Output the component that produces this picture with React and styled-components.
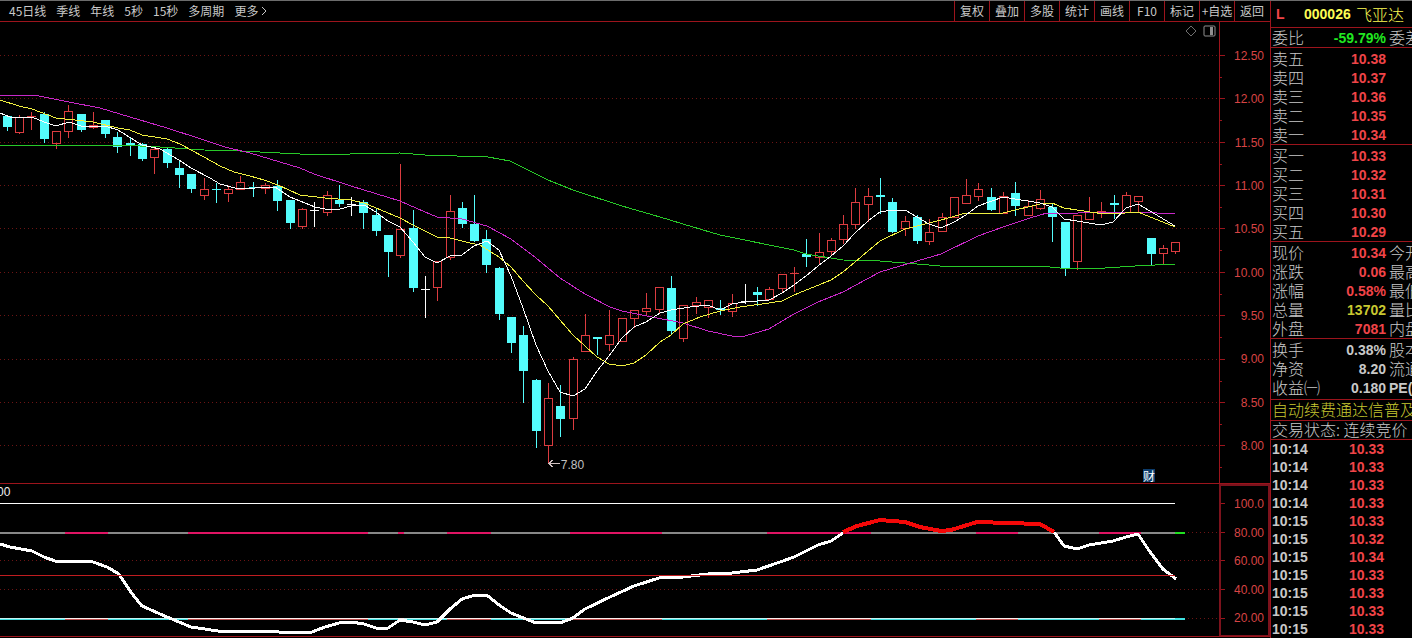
import React from "react";
import styled, { createGlobalStyle } from "styled-components";

const LINE = "#9c141c";
const DIM_LINE = "#7c121c";
const RED = "#f04448";
const CANDLE_RED = "#dc3c40";
const CYAN = "#54fcfc";
const GREY = "#c8c8c8";
const YELLOW = "#fcfc54";

const GlobalStyle = createGlobalStyle`
  * { box-sizing: border-box; }
  body {
    margin: 0;
    background: #000;
    color: ${GREY};
    font-family: "Liberation Sans", "Noto Sans CJK SC", sans-serif;
    overflow: hidden;
  }
`;

const Screen = styled.div`
  display: grid;
  grid-template-columns: minmax(0, 1fr) 142px;
  border-top: 1px solid #6c6c6c;
  background: #000;
`;

const Workspace = styled.main`
  display: flex;
  flex-direction: column;
  min-width: 0;
`;

const Toolbar = styled.header`
  display: flex;
  justify-content: space-between;
  height: 21px;
  border-bottom: 1px solid ${LINE};
`;

const Periods = styled.nav`
  display: flex;
  align-items: center;
  gap: 10px;
  padding-left: 9px;
`;

const barText = `
  border: 0;
  padding: 0;
  background: none;
  color: ${GREY};
  font-family: "Noto Sans CJK SC", sans-serif;
  font-size: 12px;
  line-height: 20px;
  white-space: nowrap;
`;

const PeriodButton = styled.button`
  ${barText}
  display: flex;
  align-items: center;
  gap: 2px;
`;

const Actions = styled.div`
  display: flex;
  padding-right: 1px;
`;

const ActionButton = styled.button`
  ${barText}
  width: 35px;
  border-left: 1px solid ${LINE};
`;

const Pane = styled.section`
  display: flex;
  height: ${(p) => p.$height}px;
  border-bottom: 1px solid ${LINE};
`;

const Plot = styled.div`
  position: relative;
  flex: 1;
  min-width: 0;
  overflow: hidden;
`;

const PlotSvg = styled.svg`
  display: block;
  width: 100%;
  height: 100%;
`;

const PriceAxis = styled.div`
  display: flex;
  width: 51px;
`;

const IndicatorAxis = styled(PriceAxis)`
  border: 2px solid ${DIM_LINE};
  border-bottom-width: 1px;
`;

const TickSvg = styled.svg`
  display: block;
  flex: none;
  width: 6px;
  height: 100%;
`;

const Scale = styled.div`
  flex: 1;
  display: flex;
  flex-direction: column;
  justify-content: space-between;
  padding: ${(p) => p.$padding};
  text-align: right;
  font-size: 12px;
  line-height: 16px;
  color: #d84444;
`;

const PlotTools = styled.div`
  position: absolute;
  top: 3px;
  right: 3px;
  display: flex;
  gap: 6px;
`;

const ToolButton = styled.button`
  border: 0;
  padding: 0;
  background: none;
  display: flex;
`;

const LowLabel = styled.span`
  position: absolute;
  left: 46%;
  top: 435px;
  font-size: 12px;
  line-height: 16px;
  color: #c0c0c0;
`;

const ReportBadge = styled.span`
  position: absolute;
  right: 64px;
  top: 447px;
  font-family: "Noto Sans CJK SC", sans-serif;
  font-size: 12px;
  line-height: 13px;
  color: #fff;
  background: #0c3c6c;
`;

const IndicatorLabel = styled.span`
  position: absolute;
  left: -3px;
  top: 0;
  font-size: 12px;
  line-height: 16px;
  color: #f0f0f0;
`;

const Sidebar = styled.aside`
  border-left: 1px solid ${LINE};
  overflow: hidden;
  font-family: "Noto Sans CJK SC", sans-serif;
  font-size: 16px;
  font-weight: 300;
`;

const Title = styled.h1`
  display: flex;
  align-items: center;
  height: 27px;
  margin: 0;
  padding-left: 5px;
  border-bottom: 1px solid ${LINE};
  font-size: 16px;
  line-height: 20px;
  font-weight: 300;
  color: ${YELLOW};
  white-space: nowrap;
`;

const Level = styled.span`
  width: 28px;
  color: ${RED};
  font-family: "Liberation Sans", sans-serif;
  font-size: 14px;
  font-weight: bold;
`;

const Code = styled.span`
  width: 52px;
  font-family: "Liberation Sans", sans-serif;
  font-size: 14px;
  font-weight: bold;
`;

const Block = styled.div`
  padding: ${(p) => p.$padding || "1px 0 0"};
  border-bottom: ${(p) => (p.$open ? 0 : 1)}px solid ${LINE};
`;

const Table = styled.table`
  width: 100%;
  table-layout: fixed;
  border-collapse: collapse;
`;

const Row = styled.tr`
  height: ${(p) => p.$height || 19}px;
  line-height: 16px;
`;

const Label = styled.th`
  width: 52px;
  padding: 0 0 2px 1px;
  text-align: left;
  font-weight: 300;
  white-space: nowrap;
`;

const Value = styled.td`
  padding: 0;
  text-align: right;
  font-family: "Liberation Sans", sans-serif;
  font-size: 14px;
  font-weight: bold;
  color: ${(p) => p.$color || RED};
`;

const Extra = styled.td`
  width: 26px;
  padding: 0 0 2px 3px;
  overflow: hidden;
  white-space: nowrap;
`;

const LatinExtra = styled(Extra)`
  padding-bottom: 0;
  font-family: "Liberation Sans", "Noto Sans CJK SC", sans-serif;
  font-size: 14px;
  font-weight: bold;
`;

const Time = styled.th`
  width: 52px;
  padding: 0 0 0 1px;
  text-align: left;
  font-family: "Liberation Sans", sans-serif;
  font-size: 14px;
  font-weight: bold;
`;

const TradePrice = styled(Value)`
  padding-right: 28px;
`;

const Notice = styled.div`
  height: ${(p) => p.$height}px;
  line-height: ${(p) => p.$height - 3}px;
  padding-left: 1px;
  border-bottom: 1px solid ${LINE};
  white-space: nowrap;
  overflow: hidden;
  color: ${(p) => p.$color || GREY};
`;

const NoticeLink = styled.a`
  color: inherit;
  text-decoration: none;
`;

/* kind (r: up, c: down, w: flat), high, body top, body bottom, low */
const CANDLES = `c115,116,127,130 r115,117,132,133 r112,116,117,129 c112,114,139,142 r131,131,143,148
r105,111,131,137 c114,114,130,131 r112,125,127,128 c120,120,134,137 c132,137,147,152 c137,143,145,155
c143,144,159,160 r147,149,157,173 c148,149,163,167 c161,168,175,187 c174,174,189,192 r178,189,195,199
c183,189,190,202 r187,189,193,201 r176,182,189,189 c182,187,188,196 r183,185,188,193 c180,186,201,210
c200,200,223,228 r208,209,226,228 w202,210,210,226 r191,195,212,215 c185,200,204,206 w197,204,204,215
c200,202,213,228 c209,215,231,235 c235,235,252,276 r164,229,255,257 c210,228,288,291 w276,289,289,317
r261,261,287,300 r195,211,257,259 c202,208,224,227 c195,224,241,241 c230,239,265,272 c267,268,314,319
c317,317,343,352 c326,335,371,402 c379,380,431,447 r383,398,445,463 c385,406,419,436 r357,359,418,429
r314,335,351,351 c337,337,339,354 r310,335,344,350 r318,318,341,341 r310,310,318,327 r293,308,311,315
r287,287,309,312 c276,288,331,334 r305,305,338,341 r297,302,305,313 r300,300,307,317 c300,308,310,314
r294,303,311,316 w284,301,301,303 c287,292,295,305 r287,289,299,299 r274,274,288,292 r267,273,274,291
c239,254,257,266 r233,252,257,263 r238,240,251,254 r215,224,239,243 r188,202,224,228 r188,196,204,221
c178,195,197,213 c198,202,232,232 r216,221,228,235 c215,217,241,243 r219,232,241,244 r213,217,231,231
r197,197,217,217 r179,195,203,203 r183,189,196,200 c188,197,210,210 r192,196,213,213 c182,193,206,215
r200,206,215,215 r190,199,208,209 c204,207,217,241 c222,222,269,275 r215,215,261,269 r197,212,219,219
r202,211,212,217 c195,203,205,218 r192,195,212,212 r196,196,201,212 c238,238,254,264 r245,248,253,263
r242,242,251,253`
  .split(/\s+/)
  .map((entry, i) => {
    const [high, top, bottom, low] = entry.slice(1).split(",").map(Number);
    return { kind: entry[0], x: Math.floor((72 + i * 123) / 10), high, top, bottom, low };
  });

const AVERAGES = [
  {
    color: "#28c828",
    points:
      "0,145 120,145 160,147 204,150 240,151 300,154 350,154 400,153 425,155 488,157 510,161 548,180 573,190 622,206 660,217 683,224 720,235 794,250 806,254 843,260 880,261 917,264 940,266 990,266 1010,267 1040,266 1060,268 1105,268 1135,266 1175,264",
  },
  {
    color: "#c828c8",
    points:
      "0,95 34,95 69,102 100,108 130,117 167,128 204,140 225,147 250,153 300,168 314,174 351,186 400,201 425,212 437,217 462,219 487,226 511,239 536,258 560,278 585,294 610,307 622,311 657,318 683,323 708,331 732,336 745,336 769,329 794,314 818,302 843,292 880,272 917,261 941,254 978,236 1003,227 1030,218 1047,213 1067,214 1090,212 1120,213 1138,212 1175,214",
  },
  {
    color: "#f0f040",
    points:
      "0,100 19,106 32,109 56,118 93,122 118,128 130,130 142,135 167,139 180,144 204,157 220,166 234,172 250,176 264,180 278,185 300,195 325,198 351,200 364,203 376,208 388,213 400,218 413,225 437,237 450,238 470,243 480,245 499,257 511,267 523,281 536,295 548,306 560,320 573,335 585,346 597,357 609,364 622,366 634,363 646,355 660,342 671,335 683,324 700,317 720,311 740,307 769,303 782,301 794,295 831,280 843,272 855,262 868,251 880,241 905,229 941,220 966,213 1003,213 1040,204 1052,203 1064,208 1090,212 1105,214 1125,213 1138,212 1150,217 1163,222 1175,227",
  },
  {
    color: "#fcfcfc",
    points:
      "0,113 10,117 32,117 44,122 56,126 69,122 81,126 105,126 118,130 142,145 160,149 179,160 191,168 210,178 220,184 235,188 255,188 275,187 290,197 315,207 325,209 340,209 351,206 364,205 376,212 388,221 400,227 413,242 425,257 437,263 450,256 462,255 474,246 487,241 499,250 511,276 523,308 536,345 548,371 560,392 573,396 585,389 597,371 609,356 622,338 634,327 646,322 660,313 671,310 690,307 708,305 720,310 732,304 745,302 769,300 782,293 794,285 806,276 818,266 831,256 843,246 855,233 868,221 880,212 892,210 905,210 917,217 929,224 941,228 954,222 966,215 978,206 1003,197 1015,199 1040,203 1052,207 1064,219 1077,221 1101,225 1113,222 1126,208 1138,204 1150,211 1175,226",
  },
];

const PRICES = ["12.50", "12.00", "11.50", "11.00", "10.50", "10.00", "9.50", "9.00", "8.50", "8.00"];
const PRICE_LINES = [55, 98, 142, 185, 228, 272, 315, 359, 402, 445];
const LEVELS = ["100.0", "80.00", "60.00", "40.00", "20.00"];
const LEVEL_LINES = [503, 532, 560, 589, 618];
const ZONES = [[65, 108], [188, 368], [398, 404], [447, 491], [570, 662], [767, 871], [976, 1018], [1099, 1141]];

const STRENGTH_START =
  "0,544 10,547 32,551 44,557 55,561 75,561 93,562 107,567 119,574 130,591 142,606 167,617 191,627 225,632 240,631 268,631 290,633 312,632 325,627 339,623 351,622 364,624 376,628 388,628 400,620 413,622 425,625 437,622 450,609 462,599 475,595 488,596 499,605 511,613 536,623 548,622 560,623 573,618 585,609 610,597 634,586 659,578 683,577 708,574 732,573 757,570 780,562 794,557 818,545 831,541 843,533";
const STRENGTH_HOT = "843,532 857,526 880,520 905,522 920,527 941,531 951,530 977,522 1040,524 1054,532";
const STRENGTH_END = "1054,532 1064,546 1077,549 1089,545 1113,541 1126,537 1138,534 1150,552 1163,569 1176,579";

function Candle({ kind, x, high, top, bottom, low }) {
  const color = kind === "r" ? CANDLE_RED : kind === "c" ? CYAN : "#fcfcfc";
  const height = bottom - top;
  if (kind === "r" && height > 1) {
    return (
      <g stroke={color} fill="none">
        <path d={`M${x + 0.5} ${high}V${top}M${x + 0.5} ${bottom}V${low + 1}`} />
        <rect x={x - 3.5} y={top + 0.5} width="8" height={height} />
      </g>
    );
  }
  return (
    <g fill={color}>
      <rect x={x} y={high} width="1" height={low - high + 1} />
      <rect x={x - 4} y={top} width="9" height={Math.max(height, 1)} />
    </g>
  );
}

function GridLines({ rows }) {
  return rows.map((y) => (
    <path key={y} d={`M0 ${y + 0.5}H1219`} stroke="#6c1414" strokeDasharray="1 3" />
  ));
}

function PriceChart() {
  return (
    <Pane $height={462}>
      <Plot>
        <PlotSvg viewBox="0 22 1219 461" preserveAspectRatio="none" shapeRendering="crispEdges">
          <GridLines rows={PRICE_LINES} />
          {CANDLES.map((candle) => (
            <Candle key={candle.x} {...candle} />
          ))}
          {AVERAGES.map(({ color, points }) => (
            <polyline key={color} points={points} fill="none" stroke={color} />
          ))}
          <path d="M549 463.5H560M552.5 460L549 463.5L552.5 467" fill="none" stroke="#d0c0c0" />
        </PlotSvg>
        <PlotTools>
          <ToolButton aria-label="标注">
            <svg width="12" height="12" viewBox="0 0 12 12">
              <path d="M6 1L11 6L6 11L1 6Z" fill="none" stroke="#707070" />
            </svg>
          </ToolButton>
          <ToolButton aria-label="侧栏">
            <svg width="13" height="12" viewBox="0 0 13 12">
              <rect x="1" y="1" width="11" height="10" rx="1" fill="none" stroke="#909090" />
              <rect x="7" y="2" width="3" height="8" fill="#909090" />
            </svg>
          </ToolButton>
        </PlotTools>
        <LowLabel>7.80</LowLabel>
        <ReportBadge>财</ReportBadge>
      </Plot>
      <PriceAxis>
        <TickSvg viewBox="0 22 6 461" preserveAspectRatio="none">
          <path d="M0.5 22V483" stroke={LINE} />
          {PRICE_LINES.map((y) => (
            <path key={y} d={`M0 ${y + 0.5}H6M0 ${y + 22.5}H3`} stroke={LINE} />
          ))}
        </TickSvg>
        <Scale $padding="26px 6px 29px 0">
          {PRICES.map((price) => (
            <span key={price}>{price}</span>
          ))}
        </Scale>
      </PriceAxis>
    </Pane>
  );
}

function IndicatorChart() {
  return (
    <Pane $height={153}>
      <Plot>
        <PlotSvg viewBox="0 484 1219 152" preserveAspectRatio="none" shapeRendering="crispEdges">
          <GridLines rows={LEVEL_LINES.slice(1)} />
          <path d="M0 503.5H1175" stroke="#fcfcfc" />
          <rect y="532" width="1175" height="2" fill="#888" />
          <rect y="618" width="1185" height="2" fill="#40e0e0" />
          <rect y="618" width="1175" height="1" fill="#c8f4f4" />
          {ZONES.map(([from, to]) => (
            <g key={from}>
              <rect x={from} y="532" width={to - from} height="2" fill="#e01464" />
              <rect x={from} y="618" width={to - from} height="1" fill="#fcf0f0" />
              <rect x={from} y="619" width={to - from} height="1" fill="#c05050" />
            </g>
          ))}
          <rect x="1175" y="532" width="10" height="2" fill="#20e020" />
          <g fill="none" strokeWidth="3" strokeLinejoin="round">
            <polyline points={STRENGTH_START} stroke="#fff" />
            <polyline points={STRENGTH_END} stroke="#fff" />
            <polyline points={STRENGTH_HOT} stroke="#f40808" strokeWidth="4" />
          </g>
          <path d="M0 575.5H1175" stroke="#c01c20" />
        </PlotSvg>
        <IndicatorLabel>00</IndicatorLabel>
      </Plot>
      <IndicatorAxis>
        <TickSvg viewBox="0 486 6 149" preserveAspectRatio="none">
          {LEVEL_LINES.map((y) => (
            <path key={y} d={`M0 ${y + 0.5}H4`} stroke={LINE} />
          ))}
        </TickSvg>
        <Scale $padding="10px 4px 9px 0">
          {LEVELS.map((level) => (
            <span key={level}>{level}</span>
          ))}
        </Scale>
      </IndicatorAxis>
    </Pane>
  );
}

const SELL = [["卖五", "10.38"], ["卖四", "10.37"], ["卖三", "10.36"], ["卖二", "10.35"], ["卖一", "10.34"]];
const BUY = [["买一", "10.33"], ["买二", "10.32"], ["买三", "10.31"], ["买四", "10.30"], ["买五", "10.29"]];
const QUOTE = [
  ["现价", "10.34", "今开"],
  ["涨跌", "0.06", "最高"],
  ["涨幅", "0.58%", "最低"],
  ["总量", "13702", "量比", "#c8c830"],
  ["外盘", "7081", "内盘"],
];
const FUNDAMENTALS = [
  ["换手", "0.38%", "股本", GREY],
  ["净资", "8.20", "流通", GREY],
  ["收益㈠", "0.180", "PE(动)", GREY, LatinExtra],
];
const TRADES = [
  ["10:14", "10.33"], ["10:14", "10.33"], ["10:14", "10.33"], ["10:14", "10.33"],
  ["10:15", "10.33"], ["10:15", "10.32"], ["10:15", "10.34"], ["10:15", "10.33"],
  ["10:15", "10.33"], ["10:15", "10.33"], ["10:15", "10.33"],
];

function QuoteBlock({ rows, padding }) {
  return (
    <Block $padding={padding}>
      <Table>
        <tbody>
          {rows.map(([label, value, extra, color, ExtraCell = Extra]) => (
            <Row key={label}>
              <Label scope="row">{label}</Label>
              <Value $color={color}>{value}</Value>
              <ExtraCell>{extra}</ExtraCell>
            </Row>
          ))}
        </tbody>
      </Table>
    </Block>
  );
}

const PERIODS = ["45日线", "季线", "年线", "5秒", "15秒", "多周期"];
const ACTIONS = ["复权", "叠加", "多股", "统计", "画线", "F10", "标记", "+自选", "返回"];

export default function App() {
  return (
    <>
      <GlobalStyle />
      <Screen>
        <Workspace>
          <Toolbar>
            <Periods>
              {PERIODS.map((period) => (
                <PeriodButton key={period}>{period}</PeriodButton>
              ))}
              <PeriodButton>
                更多
                <svg width="8" height="10" viewBox="0 0 8 10">
                  <path d="M2 1L6 5L2 9" fill="none" stroke={GREY} />
                </svg>
              </PeriodButton>
            </Periods>
            <Actions>
              {ACTIONS.map((action) => (
                <ActionButton key={action}>{action}</ActionButton>
              ))}
            </Actions>
          </Toolbar>
          <PriceChart />
          <IndicatorChart />
        </Workspace>
        <Sidebar>
          <Title>
            <Level>L</Level>
            <Code>000026</Code>
            飞亚达
          </Title>
          <QuoteBlock padding="0" rows={[["委比", "-59.79%", "委差", "#20e820"]]} />
          <QuoteBlock rows={SELL} />
          <QuoteBlock rows={BUY} />
          <QuoteBlock rows={QUOTE} />
          <QuoteBlock rows={FUNDAMENTALS} padding="1px 0 2px" />
          <Notice $height={21} $color="#c8c830">
            <NoticeLink href="#notice">自动续费通达信普及版</NoticeLink>
          </Notice>
          <Notice $height={19}>交易状态: 连续竞价</Notice>
          <Block $open $padding="0">
            <Table>
              <tbody>
                {TRADES.map(([time, price], i) => (
                  <Row key={i} $height={18}>
                    <Time scope="row">{time}</Time>
                    <TradePrice>{price}</TradePrice>
                  </Row>
                ))}
              </tbody>
            </Table>
          </Block>
        </Sidebar>
      </Screen>
    </>
  );
}
